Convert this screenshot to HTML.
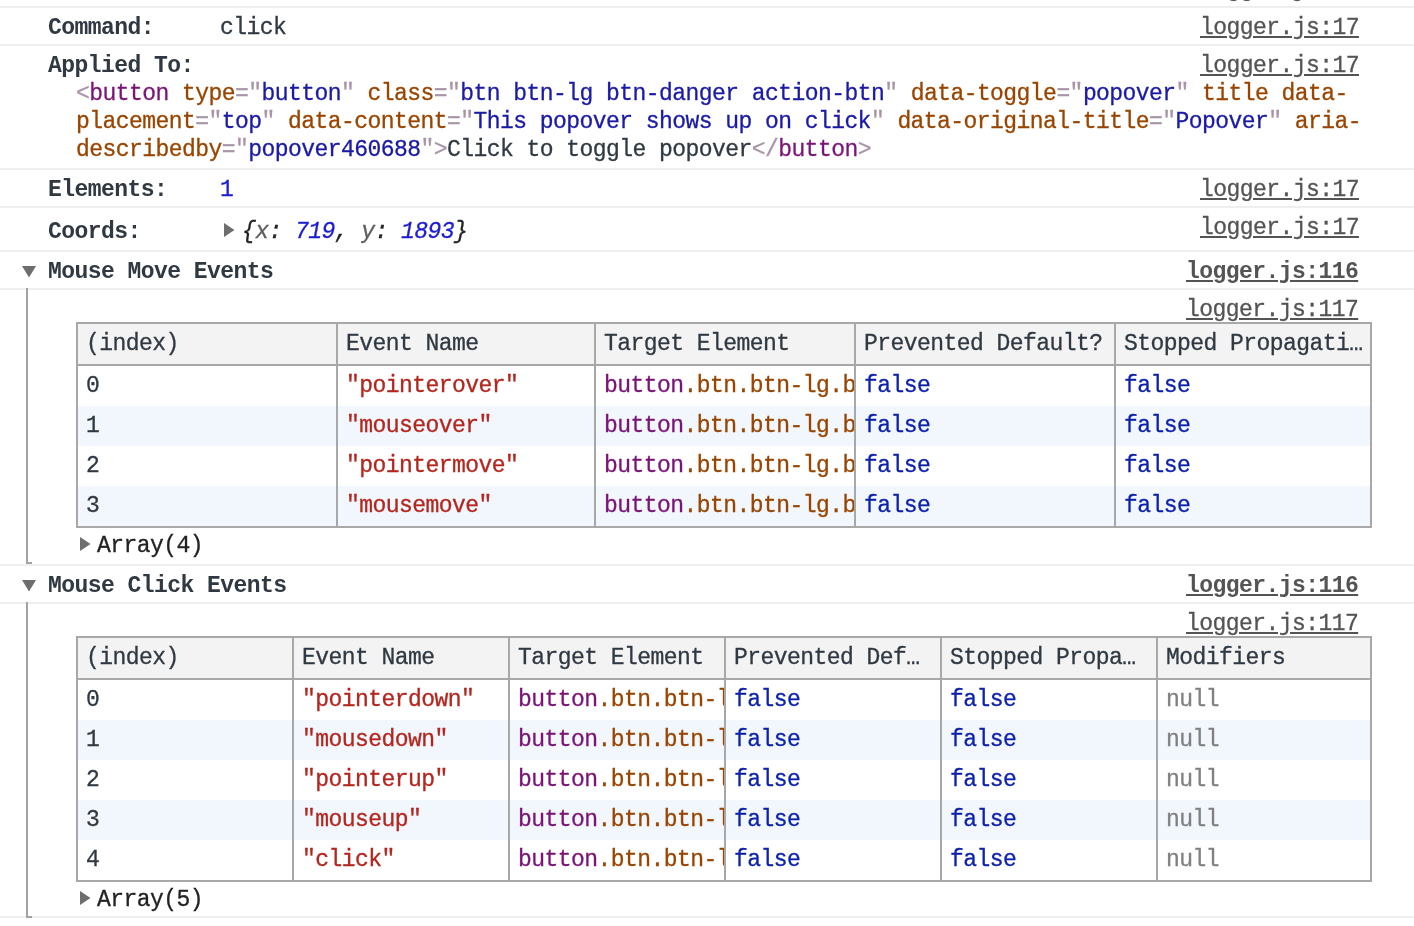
<!DOCTYPE html>
<html><head><meta charset="utf-8"><style>
html,body{margin:0;padding:0;background:#fff;}
body{width:1414px;height:926px;overflow:hidden;position:relative;}
.t{position:absolute;font-family:"Liberation Mono",monospace;font-size:23px;line-height:28px;white-space:pre;letter-spacing:-0.555px;color:#303942;will-change:transform;-webkit-text-stroke:0.3px currentColor;}
.r{position:absolute;}
.clip{position:absolute;overflow:hidden;}
.b{font-weight:bold;-webkit-text-stroke:0;}
.i{font-style:italic;}
.lab{color:#303942;}
.lnk{color:#545454;text-decoration:underline;text-decoration-thickness:2px;text-underline-offset:2px;}
.tg{color:#a894a6;}
.tn{color:#7a1476;}
.an{color:#994500;}
.av{color:#1a1aa6;}
.tx{color:#303942;}
.num{color:#1c1cd0;}
.br{color:#222;}
.key{color:#5e5e5e;}
.hd{color:#303942;}
.str{color:#b3261e;}
.bool{color:#0d22aa;}
.nul{color:#808080;}
.arr{color:#222;}
</style></head><body>
<div class="r" style="left:0px;top:6px;width:1414px;height:2px;background:#efefef;"></div>
<div class="r" style="left:0px;top:44px;width:1414px;height:2px;background:#efefef;"></div>
<div class="r" style="left:0px;top:168px;width:1414px;height:2px;background:#efefef;"></div>
<div class="r" style="left:0px;top:206px;width:1414px;height:2px;background:#efefef;"></div>
<div class="r" style="left:0px;top:250px;width:1414px;height:2px;background:#efefef;"></div>
<div class="r" style="left:0px;top:288px;width:1414px;height:2px;background:#efefef;"></div>
<div class="r" style="left:0px;top:564px;width:1414px;height:2px;background:#efefef;"></div>
<div class="r" style="left:0px;top:602px;width:1414px;height:2px;background:#efefef;"></div>
<div class="r" style="left:0px;top:916px;width:1414px;height:2px;background:#efefef;"></div>
<div class="t lnk" style="left:1200px;top:-24px;">logger.js:17</div>
<div class="t b lab" style="left:48px;top:14px;">Command:</div>
<div class="t lab" style="left:220px;top:14px;">click</div>
<div class="t lnk" style="left:1200px;top:14px;">logger.js:17</div>
<div class="t b lab" style="left:48px;top:52px;">Applied To:</div>
<div class="t lnk" style="left:1200px;top:52px;">logger.js:17</div>
<div class="t " style="left:76px;top:80px;"><span class="tg">&lt;</span><span class="tn">button</span> <span class="an">type</span><span class="tg">="</span><span class="av">button</span><span class="tg">"</span> <span class="an">class</span><span class="tg">="</span><span class="av">btn btn-lg btn-danger action-btn</span><span class="tg">"</span> <span class="an">data-toggle</span><span class="tg">="</span><span class="av">popover</span><span class="tg">"</span> <span class="an">title</span> <span class="an">data-</span></div>
<div class="t " style="left:76px;top:108px;"><span class="an">placement</span><span class="tg">="</span><span class="av">top</span><span class="tg">"</span> <span class="an">data-content</span><span class="tg">="</span><span class="av">This popover shows up on click</span><span class="tg">"</span> <span class="an">data-original-title</span><span class="tg">="</span><span class="av">Popover</span><span class="tg">"</span> <span class="an">aria-</span></div>
<div class="t " style="left:76px;top:136px;"><span class="an">describedby</span><span class="tg">="</span><span class="av">popover460688</span><span class="tg">"&gt;</span><span class="tx">Click to toggle popover</span><span class="tg">&lt;/</span><span class="tn">button</span><span class="tg">&gt;</span></div>
<div class="t b lab" style="left:48px;top:176px;">Elements:</div>
<div class="t " style="left:220px;top:176px;"><span class="num">1</span></div>
<div class="t lnk" style="left:1200px;top:176px;">logger.js:17</div>
<div class="t b lab" style="left:48px;top:218px;">Coords:</div>
<svg class="r" style="left:224px;top:223px" width="11" height="14" viewBox="0 0 11 14"><path d="M0 0L10.5 7L0 14Z" fill="#6e6e6e"/></svg>
<div class="t i" style="left:242px;top:218px;"><span class="br">{</span><span class="key">x</span><span class="br">: </span><span class="num">719</span><span class="br">, </span><span class="key">y</span><span class="br">: </span><span class="num">1893</span><span class="br">}</span></div>
<div class="t lnk" style="left:1200px;top:214px;">logger.js:17</div>
<svg class="r" style="left:22px;top:266px" width="14" height="12" viewBox="0 0 14 12"><path d="M0 0H14L7 11.5Z" fill="#6e6e6e"/></svg>
<div class="t b lab" style="left:48px;top:258px;">Mouse Move Events</div>
<div class="t lnk b" style="left:1186px;top:258px;">logger.js:116</div>
<svg class="r" style="left:22px;top:580px" width="14" height="12" viewBox="0 0 14 12"><path d="M0 0H14L7 11.5Z" fill="#6e6e6e"/></svg>
<div class="t b lab" style="left:48px;top:572px;">Mouse Click Events</div>
<div class="t lnk b" style="left:1186px;top:572px;">logger.js:116</div>
<div class="r" style="left:26px;top:288px;width:2px;height:276px;background:#a3a3a3;"></div>
<div class="r" style="left:26px;top:562px;width:6px;height:2px;background:#a3a3a3;"></div>
<div class="r" style="left:26px;top:602px;width:2px;height:316px;background:#a3a3a3;"></div>
<div class="r" style="left:26px;top:916px;width:6px;height:2px;background:#a3a3a3;"></div>
<div class="t lnk" style="left:1186px;top:296px;">logger.js:117</div>
<div class="t lnk" style="left:1186px;top:610px;">logger.js:117</div>
<div class="r" style="left:76px;top:322px;width:1296px;height:206px;background:#fff;"></div>
<div class="r" style="left:76px;top:324px;width:1296px;height:40px;background:#f3f3f3;"></div>
<div class="r" style="left:76px;top:406px;width:1296px;height:40px;background:#f2f6fd;"></div>
<div class="r" style="left:76px;top:486px;width:1296px;height:40px;background:#f2f6fd;"></div>
<div class="r" style="left:76px;top:322px;width:1296px;height:2px;background:#a8a8a8;"></div>
<div class="r" style="left:76px;top:364px;width:1296px;height:2px;background:#a8a8a8;"></div>
<div class="r" style="left:76px;top:526px;width:1296px;height:2px;background:#a8a8a8;"></div>
<div class="r" style="left:76px;top:322px;width:2px;height:206px;background:#a8a8a8;"></div>
<div class="r" style="left:336px;top:322px;width:2px;height:206px;background:#a8a8a8;"></div>
<div class="r" style="left:594px;top:322px;width:2px;height:206px;background:#a8a8a8;"></div>
<div class="r" style="left:854px;top:322px;width:2px;height:206px;background:#a8a8a8;"></div>
<div class="r" style="left:1114px;top:322px;width:2px;height:206px;background:#a8a8a8;"></div>
<div class="r" style="left:1370px;top:322px;width:2px;height:206px;background:#a8a8a8;"></div>
<div class="clip" style="left:78px;top:322px;width:258px;height:204px">
<div class="t " style="left:8px;top:8px;"><span class="hd">(index)</span></div>
<div class="t " style="left:8px;top:50px;"><span class="hd">0</span></div>
<div class="t " style="left:8px;top:90px;"><span class="hd">1</span></div>
<div class="t " style="left:8px;top:130px;"><span class="hd">2</span></div>
<div class="t " style="left:8px;top:170px;"><span class="hd">3</span></div>
</div>
<div class="clip" style="left:338px;top:322px;width:256px;height:204px">
<div class="t " style="left:8px;top:8px;"><span class="hd">Event Name</span></div>
<div class="t " style="left:8px;top:50px;"><span class="str">"pointerover"</span></div>
<div class="t " style="left:8px;top:90px;"><span class="str">"mouseover"</span></div>
<div class="t " style="left:8px;top:130px;"><span class="str">"pointermove"</span></div>
<div class="t " style="left:8px;top:170px;"><span class="str">"mousemove"</span></div>
</div>
<div class="clip" style="left:596px;top:322px;width:258px;height:204px">
<div class="t " style="left:8px;top:8px;"><span class="hd">Target Element</span></div>
<div class="t " style="left:8px;top:50px;"><span class="tn">button</span><span class="an">.btn.btn-lg.btn-danger.action-btn</span></div>
<div class="t " style="left:8px;top:90px;"><span class="tn">button</span><span class="an">.btn.btn-lg.btn-danger.action-btn</span></div>
<div class="t " style="left:8px;top:130px;"><span class="tn">button</span><span class="an">.btn.btn-lg.btn-danger.action-btn</span></div>
<div class="t " style="left:8px;top:170px;"><span class="tn">button</span><span class="an">.btn.btn-lg.btn-danger.action-btn</span></div>
</div>
<div class="clip" style="left:856px;top:322px;width:258px;height:204px">
<div class="t " style="left:8px;top:8px;"><span class="hd">Prevented Default?</span></div>
<div class="t " style="left:8px;top:50px;"><span class="bool">false</span></div>
<div class="t " style="left:8px;top:90px;"><span class="bool">false</span></div>
<div class="t " style="left:8px;top:130px;"><span class="bool">false</span></div>
<div class="t " style="left:8px;top:170px;"><span class="bool">false</span></div>
</div>
<div class="clip" style="left:1116px;top:322px;width:254px;height:204px">
<div class="t " style="left:8px;top:8px;"><span class="hd">Stopped Propagati…</span></div>
<div class="t " style="left:8px;top:50px;"><span class="bool">false</span></div>
<div class="t " style="left:8px;top:90px;"><span class="bool">false</span></div>
<div class="t " style="left:8px;top:130px;"><span class="bool">false</span></div>
<div class="t " style="left:8px;top:170px;"><span class="bool">false</span></div>
</div>
<svg class="r" style="left:80px;top:537px" width="11" height="14" viewBox="0 0 11 14"><path d="M0 0L10.5 7L0 14Z" fill="#6e6e6e"/></svg>
<div class="t " style="left:97px;top:532px;"><span class="arr">Array(4)</span></div>
<div class="r" style="left:76px;top:636px;width:1296px;height:246px;background:#fff;"></div>
<div class="r" style="left:76px;top:638px;width:1296px;height:40px;background:#f3f3f3;"></div>
<div class="r" style="left:76px;top:720px;width:1296px;height:40px;background:#f2f6fd;"></div>
<div class="r" style="left:76px;top:800px;width:1296px;height:40px;background:#f2f6fd;"></div>
<div class="r" style="left:76px;top:636px;width:1296px;height:2px;background:#a8a8a8;"></div>
<div class="r" style="left:76px;top:678px;width:1296px;height:2px;background:#a8a8a8;"></div>
<div class="r" style="left:76px;top:880px;width:1296px;height:2px;background:#a8a8a8;"></div>
<div class="r" style="left:76px;top:636px;width:2px;height:246px;background:#a8a8a8;"></div>
<div class="r" style="left:292px;top:636px;width:2px;height:246px;background:#a8a8a8;"></div>
<div class="r" style="left:508px;top:636px;width:2px;height:246px;background:#a8a8a8;"></div>
<div class="r" style="left:724px;top:636px;width:2px;height:246px;background:#a8a8a8;"></div>
<div class="r" style="left:940px;top:636px;width:2px;height:246px;background:#a8a8a8;"></div>
<div class="r" style="left:1156px;top:636px;width:2px;height:246px;background:#a8a8a8;"></div>
<div class="r" style="left:1370px;top:636px;width:2px;height:246px;background:#a8a8a8;"></div>
<div class="clip" style="left:78px;top:636px;width:214px;height:244px">
<div class="t " style="left:8px;top:8px;"><span class="hd">(index)</span></div>
<div class="t " style="left:8px;top:50px;"><span class="hd">0</span></div>
<div class="t " style="left:8px;top:90px;"><span class="hd">1</span></div>
<div class="t " style="left:8px;top:130px;"><span class="hd">2</span></div>
<div class="t " style="left:8px;top:170px;"><span class="hd">3</span></div>
<div class="t " style="left:8px;top:210px;"><span class="hd">4</span></div>
</div>
<div class="clip" style="left:294px;top:636px;width:214px;height:244px">
<div class="t " style="left:8px;top:8px;"><span class="hd">Event Name</span></div>
<div class="t " style="left:8px;top:50px;"><span class="str">"pointerdown"</span></div>
<div class="t " style="left:8px;top:90px;"><span class="str">"mousedown"</span></div>
<div class="t " style="left:8px;top:130px;"><span class="str">"pointerup"</span></div>
<div class="t " style="left:8px;top:170px;"><span class="str">"mouseup"</span></div>
<div class="t " style="left:8px;top:210px;"><span class="str">"click"</span></div>
</div>
<div class="clip" style="left:510px;top:636px;width:214px;height:244px">
<div class="t " style="left:8px;top:8px;"><span class="hd">Target Element</span></div>
<div class="t " style="left:8px;top:50px;"><span class="tn">button</span><span class="an">.btn.btn-lg.btn-danger.action-btn</span></div>
<div class="t " style="left:8px;top:90px;"><span class="tn">button</span><span class="an">.btn.btn-lg.btn-danger.action-btn</span></div>
<div class="t " style="left:8px;top:130px;"><span class="tn">button</span><span class="an">.btn.btn-lg.btn-danger.action-btn</span></div>
<div class="t " style="left:8px;top:170px;"><span class="tn">button</span><span class="an">.btn.btn-lg.btn-danger.action-btn</span></div>
<div class="t " style="left:8px;top:210px;"><span class="tn">button</span><span class="an">.btn.btn-lg.btn-danger.action-btn</span></div>
</div>
<div class="clip" style="left:726px;top:636px;width:214px;height:244px">
<div class="t " style="left:8px;top:8px;"><span class="hd">Prevented Def…</span></div>
<div class="t " style="left:8px;top:50px;"><span class="bool">false</span></div>
<div class="t " style="left:8px;top:90px;"><span class="bool">false</span></div>
<div class="t " style="left:8px;top:130px;"><span class="bool">false</span></div>
<div class="t " style="left:8px;top:170px;"><span class="bool">false</span></div>
<div class="t " style="left:8px;top:210px;"><span class="bool">false</span></div>
</div>
<div class="clip" style="left:942px;top:636px;width:214px;height:244px">
<div class="t " style="left:8px;top:8px;"><span class="hd">Stopped Propa…</span></div>
<div class="t " style="left:8px;top:50px;"><span class="bool">false</span></div>
<div class="t " style="left:8px;top:90px;"><span class="bool">false</span></div>
<div class="t " style="left:8px;top:130px;"><span class="bool">false</span></div>
<div class="t " style="left:8px;top:170px;"><span class="bool">false</span></div>
<div class="t " style="left:8px;top:210px;"><span class="bool">false</span></div>
</div>
<div class="clip" style="left:1158px;top:636px;width:212px;height:244px">
<div class="t " style="left:8px;top:8px;"><span class="hd">Modifiers</span></div>
<div class="t " style="left:8px;top:50px;"><span class="nul">null</span></div>
<div class="t " style="left:8px;top:90px;"><span class="nul">null</span></div>
<div class="t " style="left:8px;top:130px;"><span class="nul">null</span></div>
<div class="t " style="left:8px;top:170px;"><span class="nul">null</span></div>
<div class="t " style="left:8px;top:210px;"><span class="nul">null</span></div>
</div>
<svg class="r" style="left:80px;top:891px" width="11" height="14" viewBox="0 0 11 14"><path d="M0 0L10.5 7L0 14Z" fill="#6e6e6e"/></svg>
<div class="t " style="left:97px;top:886px;"><span class="arr">Array(5)</span></div>
</body></html>
